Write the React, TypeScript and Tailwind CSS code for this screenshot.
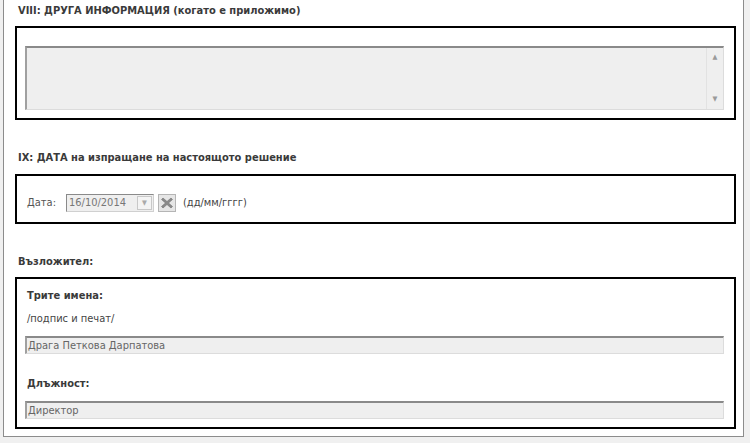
import React from "react";

const font = { fontFamily: '"DejaVu Sans Condensed", "DejaVu Sans", Tahoma, sans-serif', fontStretch: "condensed" as const };

function ClearIcon() {
  return (
    <svg width="12" height="12" viewBox="0 0 12 12">
      <path d="M2 1 L6 4.5 L10 1 L11.5 2.5 L7.5 6 L11.5 9.5 L10 11 L6 7.5 L2 11 L0.5 9.5 L4.5 6 L0.5 2.5 Z" fill="#8a8a8a" stroke="#6f6f6f" strokeWidth="0.6" />
    </svg>
  );
}

export default function App() {
  return (
    <div className="w-[750px] h-[443px] bg-[#f0f0f0] pl-[3px] overflow-hidden" style={font}>
      <div className="w-[741px] h-[437px] bg-white border-x border-b border-[#8c8c8c] pl-[11px] text-[11px] text-[#333]">
        <div className="pt-[4px] pl-[3px] font-bold leading-[14px] text-[#3a3a3a]">VIII: ДРУГА ИНФОРМАЦИЯ (когато е приложимо)</div>
        <div className="mt-[8px] w-[721px] h-[94px] border-2 border-black pt-[18px] pl-[8px]">
          <div className="w-[699px] h-[64px] bg-[#efefef] border-t-2 border-l-2 border-r border-b border-t-[#8a8a8a] border-l-[#a0a0a0] border-r-[#dcdcdc] border-b-[#dcdcdc] flex justify-end">
            <div className="w-[17px] h-full border-l border-[#e2e2e2] flex flex-col justify-between items-center py-[6px] text-[7px] text-[#9a9a9a] leading-none">
              <span>▲</span>
              <span>▼</span>
            </div>
          </div>
        </div>

        <div className="mt-[31px] pl-[3px] font-bold leading-[14px] text-[#3a3a3a]">IX: ДАТА на изпращане на настоящото решение</div>
        <div className="mt-[9px] w-[721px] h-[50px] border-2 border-black pl-[10px] pt-[18px] flex items-start">
          <span className="leading-[18px] text-[#555] mr-[10px]">Дата:</span>
          <div className="w-[88px] h-[18px] bg-[#efefef] border-t border-l border-[#8a8a8a] border-r border-b border-r-[#d0d0d0] border-b-[#d0d0d0] flex items-center justify-between pl-[2px]">
            <span className="text-[#777] leading-[16px]">16/10/2014</span>
            <div className="w-[15px] h-[14px] mr-[1px] border border-[#c8c8c8] bg-[#f4f4f4] flex items-center justify-center text-[7px] text-[#aaa]">▼</div>
          </div>
          <div className="ml-[4px] w-[18px] h-[18px] border border-[#b5b5b5] bg-[#e6e6e6] flex items-center justify-center">
            <ClearIcon />
          </div>
          <span className="ml-[7px] leading-[18px] text-[#444]">(дд/мм/гггг)</span>
        </div>

        <div className="mt-[31px] pl-[3px] font-bold leading-[14px] text-[#3a3a3a]">Възложител:</div>
        <div className="mt-[8px] w-[721px] h-[152px] border-2 border-black pl-[8px] pt-[10px]">
          <div className="pl-[2px] font-bold leading-[14px] text-[#3a3a3a]">Трите имена:</div>
          <div className="mt-[9px] pl-[2px] leading-[14px] text-[#444]">/подпис и печат/</div>
          <div className="mt-[10px] w-[699px] h-[18px] bg-[#efefef] border-t-2 border-l-2 border-r border-b border-t-[#8a8a8a] border-l-[#a0a0a0] border-r-[#dcdcdc] border-b-[#dcdcdc] pl-[1px] leading-[15px] text-[#666]">Драга Петкова Дарпатова</div>
          <div className="mt-[23px] pl-[2px] font-bold leading-[14px] text-[#3a3a3a]">Длъжност:</div>
          <div className="mt-[10px] w-[699px] h-[18px] bg-[#efefef] border-t-2 border-l-2 border-r border-b border-t-[#8a8a8a] border-l-[#a0a0a0] border-r-[#dcdcdc] border-b-[#dcdcdc] pl-[1px] leading-[15px] text-[#666]">Директор</div>
        </div>
      </div>
    </div>
  );
}
